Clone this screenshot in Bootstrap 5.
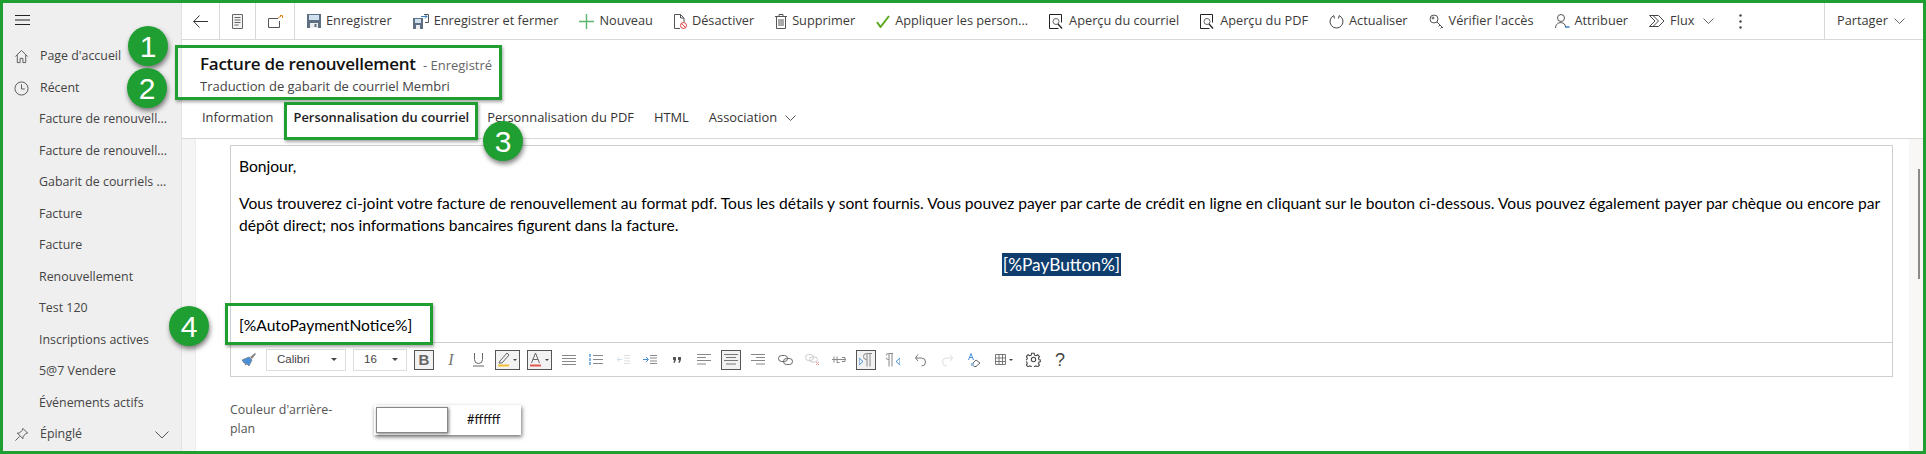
<!DOCTYPE html>
<html lang="fr">
<head>
<meta charset="utf-8">
<title>Facture de renouvellement</title>
<link href="https://cdn.jsdelivr.net/npm/bootstrap@5.3.0/dist/css/bootstrap.min.css" rel="stylesheet">
<style>
html,body{margin:0;height:454px;overflow:hidden;background:#fff}
body{font-family:"Open Sans","Noto Sans",sans-serif;font-size:12.4px;color:#3b3a39}
svg{display:block;flex:none}
.frame{position:relative;width:1926px;height:454px;border:3px solid #1f9e32;overflow:hidden;display:flex}
.side{width:179px;flex:none;background:#efefef;border-right:1px solid #e2e2e2;display:flex;flex-direction:column}
.burger{height:38px;padding:11px 0 0 12px;flex:none}
.side-row{height:31.5px;flex:none;display:flex;align-items:center;white-space:nowrap;color:#444;position:relative}
.side-row.top{padding-left:11px;gap:11px}
.side-row.sub{padding-left:36px}
.side-row .end{margin-left:auto;margin-right:12px}
.main{flex:1;min-width:0;display:flex;flex-direction:column}
.cmdbar{height:37px;flex:none;border-bottom:1px solid #d8d8d8;display:flex;align-items:stretch;white-space:nowrap;font-size:12.75px}
.cmd-ic{display:flex;align-items:center;justify-content:center;border-right:1px solid #d8d8d8;flex:none}
.w1{width:38px}.w2{width:36px}.w3{width:39px}
.cmds{display:flex;align-items:center;flex:1;padding-left:12px;gap:21px}
.cmd{display:flex;align-items:center;gap:5px}
.share{width:99px;flex:none;border-left:1px solid #d8d8d8;display:flex;align-items:center;padding-left:12px;gap:6px;margin-right:0}
.rec-head{height:59px;flex:none;padding:13px 0 0 18px}
.rec-title{font-size:17px;font-weight:600;line-height:22px;color:#111;letter-spacing:-.25px}
.rec-state{font-size:13px;font-weight:400;color:#666;letter-spacing:0;margin-left:3px}
.rec-sub{font-size:13px;line-height:20px;color:#444}
.tabbar{height:40px;flex:none;border-bottom:1px solid #d8d8d8;display:flex;gap:20px;padding:9px 0 0 20px;white-space:nowrap;color:#333;font-size:12.9px}
.tabbar .on{font-weight:600;color:#222;margin-right:-2px}
.tabbar span{display:flex;gap:8px;height:20px;align-items:center}
.body-zone{flex:1;display:flex;min-height:0}
.gutter{width:14px;flex:none;background:#f5f5f5;border-right:1px solid #ececec}
.panel{flex:1;min-width:0;padding:6px 16px 0 34px}
.scroll{width:14px;flex:none;background:#f8f7f6;padding:30px 0 0 9px}
.thumb{width:2px;height:110px;background:#8a8a88}
.editor{height:232px;border:1px solid #cfcfcf;display:flex;flex-direction:column}
.doc{height:197px;flex:none;border-bottom:1px solid #cfcfcf;padding:9px 8px 0 8px;font-family:Lato,"Open Sans",sans-serif;font-size:15.6px;line-height:22px;color:#000}
.doc p{margin:0}
.doc .para{margin-top:15px}
.doc .pay{margin-top:18px;text-align:center;font-size:17.3px}
.doc .pay span{background:#0f3d6e;color:#fff;padding:1px 1px}
.doc .auto{margin-top:38px}
.tools{flex:1;display:flex;align-items:center;gap:7px;padding-left:8px}
.tbtn{width:20px;height:20px;flex:none;display:flex;align-items:center;justify-content:center;border:1px solid transparent}
.tbtn.wide{width:25px}
.tbtn.act{border-color:#555;background:#f2f2f2}
.pick{height:22px;border:1px solid #dedede;flex:none;display:flex;align-items:center;justify-content:space-between;padding:0 8px 0 10px;font-family:"Liberation Sans",sans-serif;font-size:11.5px;color:#444}
.pick i{width:0;height:0;border:3px solid transparent;border-top-color:#444;margin-top:3px}
.p1{width:80px}.p2{width:54px}
.q{font-family:"Liberation Sans",sans-serif;font-size:18px;line-height:1;color:#444}
.tq-b{font-size:15px;color:#666}
.tq-i{font-size:16px;color:#777;font-family:"Liberation Serif",serif}
.colr{display:flex;margin-top:28px;gap:0}
.colr-lbl{width:144px;flex:none;line-height:19px;color:#555;margin-top:-5px}
.colr-box{width:147px;height:30px;display:flex;align-items:center;background:#fff;box-shadow:1px 2px 4px rgba(0,0,0,.55);padding:2px}
.swatch{width:72px;height:26px;border:1px solid #888;box-shadow:1px 1px 3px rgba(0,0,0,.5);flex:none}
.hex{margin-left:19px;font-family:Lato,sans-serif;font-size:13px;color:#111}
.mark-box{position:absolute;border:3px solid #1f9e32;box-shadow:1px 2px 3px rgba(0,0,0,.35);pointer-events:none}
.mark-num{position:absolute;width:40px;height:40px;border-radius:50%;background:#1f9e32;color:#fff;font-family:"Liberation Sans",sans-serif;font-size:30px;display:flex;align-items:center;justify-content:center;box-shadow:1px 3px 5px rgba(0,0,0,.5)}
.b1{left:172px;top:42px;width:327px;height:55px}
.b3{left:281px;top:99px;width:194px;height:38px}
.b4{left:222px;top:300px;width:208px;height:42px}
.n1{left:125px;top:23px}.n2{left:124px;top:65px}.n3{left:480px;top:118px}.n4{left:166px;top:303px}
</style>
</head>
<body>
<div class="frame">
  <nav class="side">
    <div class="burger"><svg width="15" height="12" viewBox="0 0 15 12" stroke="#222" stroke-width="1.2"><path d="M0 1.5h15M0 6h15M0 10.5h15"/></svg></div>
    <div class="side-row top"><svg width="15" height="15" viewBox="0 0 16 16" fill="none" stroke="#555"><path d="M1.5 8 8 1.5 14.5 8M3.5 6.5v8h3v-4.5h3v4.5h3v-8"/></svg><span>Page d'accueil</span></div>
    <div class="side-row top"><svg width="15" height="15" viewBox="0 0 16 16" fill="none" stroke="#555"><circle cx="8" cy="8" r="7"/><path d="M8 3.5V8.5H11.5"/></svg><span>Récent</span></div>
    <div class="side-row sub">Facture de renouvell...</div>
    <div class="side-row sub">Facture de renouvell...</div>
    <div class="side-row sub">Gabarit de courriels ...</div>
    <div class="side-row sub">Facture</div>
    <div class="side-row sub">Facture</div>
    <div class="side-row sub">Renouvellement</div>
    <div class="side-row sub">Test 120</div>
    <div class="side-row sub">Inscriptions actives</div>
    <div class="side-row sub">5@7 Vendere</div>
    <div class="side-row sub">Événements actifs</div>
    <div class="side-row top"><svg width="15" height="15" viewBox="0 0 16 16" fill="none" stroke="#555"><path d="M9.5 1.5 14.5 6.5 12.5 7 9.5 10.5 9.5 12.5 3.5 6.5 5.5 6.5 9 3.5ZM6 10 1.5 14.5"/></svg><span>Épinglé</span><svg class="end" width="14" height="8" viewBox="0 0 14 8" fill="none" stroke="#555"><path d="M.5.5 7 7 13.5.5"/></svg></div>
  </nav>
  <div class="main">
    <div class="cmdbar">
      <div class="cmd-ic w1"><svg width="15" height="13" viewBox="0 0 15 13" fill="none" stroke="#333"><path d="M6.5.5.7 6.5l5.8 6M.7 6.5H15"/></svg></div>
      <div class="cmd-ic w2"><svg width="11" height="15" viewBox="0 0 11 15" fill="#f3f3f3" stroke="#666"><path d="M.5.5h10v14H.5z"/><path d="M2.5 3.5h6M2.5 6h6M2.5 8.500h6M2.500 11h4" fill="none"/></svg></div>
      <div class="cmd-ic w3"><svg width="15" height="13" viewBox="0 0 15 13" fill="none" stroke="#555"><path d="M10 3.500H.5v9h11V6"/><path d="M10 3 13.500.8" stroke="#e08a20"/><path d="M12 .5h2.500V3" stroke="#e08a20"/></svg></div>
      <div class="cmds">
        <div class="cmd"><svg width="14" height="14" viewBox="0 0 14 14"><path d="M0 0h14v14H0z" fill="#5d6f80"/><path d="M2 1h10v5H2z" fill="#cfe0ef"/><path d="M3 9h8v5H3z" fill="#eee"/><path d="M7.500 10h2v3h-2z" fill="#5d6f80"/></svg><span>Enregistrer</span></div>
        <div class="cmd"><svg width="16" height="15" viewBox="0 0 16 15"><path d="M0 4h10v11H0z" fill="#5d6f80"/><path d="M2 5h6v4H2z" fill="#cfe0ef"/><path d="M3 11h4v4H3z" fill="#eee"/><path d="M8 2.500h6M12 .5l2 2-2 2" fill="none" stroke="#3a7ec8"/><path d="M11 .5h4.500v8H12" fill="none" stroke="#555"/></svg><span>Enregistrer et fermer</span></div>
        <div class="cmd"><svg width="15" height="15" viewBox="0 0 15 15" stroke="#5bb56a" stroke-width="1.400"><path d="M7.500 0v15M0 7.500h15"/></svg><span>Nouveau</span></div>
        <div class="cmd"><svg width="13" height="15" viewBox="0 0 13 15" fill="none" stroke="#555"><path d="M6 14.500H.5V.5h6L10 4v4M6.500.5V4H10"/><circle cx="9.500" cy="11.500" r="3" stroke="#e23b3b"/><path d="M7.500 9.500l4 4" stroke="#e23b3b"/></svg><span>Désactiver</span></div>
        <div class="cmd"><svg width="12" height="15" viewBox="0 0 12 15" fill="none" stroke="#555"><path d="M0 2.500h12M4 2.500V.5h4v2M1.500 2.500v12h9v-12M4 5v7M6 5v7M8 5v7"/></svg><span>Supprimer</span></div>
        <div class="cmd"><svg width="14" height="13" viewBox="0 0 14 13" fill="none" stroke="#5ea820" stroke-width="2"><path d="M1 7l3.500 5L13 1"/></svg><span>Appliquer les person...</span></div>
        <div class="cmd"><svg width="15" height="15" viewBox="0 0 15 15" fill="none" stroke="#222"><path d="M12.500 8.500v-8H.5v14h9"/><circle cx="7" cy="7.500" r="3" stroke="#666"/><path d="M9 10l4 4.500" stroke-width="1.300"/></svg><span>Aperçu du courriel</span></div>
        <div class="cmd"><svg width="15" height="15" viewBox="0 0 15 15" fill="none" stroke="#222"><path d="M12.500 8.500v-8H.5v14h9"/><circle cx="7" cy="7.500" r="3" stroke="#666"/><path d="M9 10l4 4.500" stroke-width="1.300"/></svg><span>Aperçu du PDF</span></div>
        <div class="cmd"><svg width="15" height="15" viewBox="0 0 15 15" fill="none" stroke="#444"><path d="M4.800 1.600A6.500 6.500 0 1 0 10.200 1.600M10.200 1.600 9.500 4.500M4.800 1.600 5.500 4.500"/></svg><span>Actualiser</span></div>
        <div class="cmd"><svg width="15" height="15" viewBox="0 0 15 15" fill="none" stroke="#555"><circle cx="5" cy="5" r="4"/><path d="M8 8l6 6M11 11l-1.500 1.500M13 13l-1.500 1.500"/><circle cx="4" cy="4" r="1"/></svg><span>Vérifier l'accès</span></div>
        <div class="cmd"><svg width="15" height="15" viewBox="0 0 15 15" fill="none" stroke="#555"><circle cx="6" cy="4" r="3.500"/><path d="M.5 14c0-7 10-7 10-1"/><path d="M10 13h4.500" stroke="#3a7ec8" stroke-width="1.500"/></svg><span>Attribuer</span></div>
        <div class="cmd"><svg width="16" height="12" viewBox="0 0 16 12" fill="none" stroke="#444"><path d="M.5.5h9L15 6l-5.500 5.500H.5M4 .5 9.500 6 4 11.500H.5L6 6 .5.5"/></svg><span>Flux</span><svg class="ms-1" width="11" height="6" viewBox="0 0 11 6" fill="none" stroke="#666"><path d="M.5.5 5.500 5.500 10.500.5"/></svg></div>
        <div class="cmd ms-1"><svg width="3" height="15" viewBox="0 0 3 15" fill="#444"><circle cx="1.500" cy="1.500" r="1.200"/><circle cx="1.500" cy="7.500" r="1.200"/><circle cx="1.500" cy="13.500" r="1.200"/></svg></div>
      </div>
      <div class="share"><span>Partager</span><svg width="11" height="6" viewBox="0 0 11 6" fill="none" stroke="#666"><path d="M.5.5 5.500 5.500 10.500.5"/></svg></div>
    </div>
    <div class="rec-head">
      <div class="rec-title">Facture de renouvellement <span class="rec-state">- Enregistré</span></div>
      <div class="rec-sub">Traduction de gabarit de courriel Membri</div>
    </div>
    <div class="tabbar">
      <span>Information</span>
      <span class="on">Personnalisation du courriel</span>
      <span>Personnalisation du PDF</span>
      <span>HTML</span>
      <span>Association <svg width="11" height="6" viewBox="0 0 11 6" fill="none" stroke="#555"><path d="M.5.5 5.500 5.500 10.500.5"/></svg></span>
    </div>
    <div class="body-zone">
      <div class="gutter"></div>
      <div class="panel">
        <div class="editor">
          <div class="doc">
            <p>Bonjour,</p>
            <p class="para">Vous trouverez ci-joint votre facture de renouvellement au format pdf. Tous les détails y sont fournis. Vous pouvez payer par carte de crédit en ligne en cliquant sur le bouton ci-dessous. Vous pouvez également payer par chèque ou encore par dépôt direct; nos informations bancaires figurent dans la facture.</p>
            <p class="pay"><span>[%PayButton%]</span></p>
            <p class="auto">[%AutoPaymentNotice%]</p>
          </div>
          <div class="tools">
            <div class="tbtn"><svg width="16" height="15" viewBox="0 0 16 15"><path d="M1 8 8 5l3 3-3 6-2-2-2 1 1-2-2 0Z" fill="#4a90d9" stroke="#666" stroke-width=".6"/><path d="M9 5l5-4 1 1-4 5Z" fill="#888"/></svg></div>
            <div class="pick p1"><span>Calibri</span><i></i></div>
            <div class="pick p2"><span>16</span><i></i></div>
            <div class="tbtn act"><b class="q tq-b">B</b></div>
            <div class="tbtn"><i class="q tq-i">I</i></div>
            <div class="tbtn"><svg width="11" height="15" viewBox="0 0 11 15" fill="none" stroke="#666"><path d="M1.500 1v6.500a4 4 0 0 0 8 0V1M0 14h11"/></svg></div>
            <div class="tbtn wide act"><svg width="21" height="15" viewBox="0 0 21 15" fill="none"><path d="M3 9l7-8 2 2-7 8-3 0Z" stroke="#666"/><path d="M1 13.500h11" stroke="#f2c037" stroke-width="2"/><path d="M16 7h4l-2 2Z" fill="#444"/></svg></div>
            <div class="tbtn wide act"><svg width="21" height="15" viewBox="0 0 21 15" fill="none"><path d="M2.500 11 6.500 1l4 10M4 7.500h5" stroke="#666"/><path d="M1 13.500h11" stroke="#e05a4f" stroke-width="2"/><path d="M16 7h4l-2 2Z" fill="#444"/></svg></div>
            <div class="tbtn"><svg width="14" height="10" viewBox="0 0 14 10" stroke="#888"><path d="M0 .5h14M0 3.500h14M0 6.500h14M0 9.500h14"/></svg></div>
            <div class="tbtn"><svg width="14" height="11" viewBox="0 0 14 11" stroke="#888"><path d="M4 1.500h10M4 5.500h10M4 9.500h10"/><path d="M1 0v3M1 4v3M1 8v3" stroke="#5a9be0" stroke-width="1.500"/></svg></div>
            <div class="tbtn"><svg width="13" height="9" viewBox="0 0 13 9" fill="none" stroke="#cfdcea"><path d="M5 4.500H0M2.500 2 0 4.500 2.500 7"/><path d="M7 .5h6M7 3h6M7 6h6M7 8.500h6" stroke="#ddd"/></svg></div>
            <div class="tbtn"><svg width="14" height="9" viewBox="0 0 14 9" fill="none" stroke="#4a90d9"><path d="M0 4.500h5M3 2l2.500 2.500L3 7"/><path d="M7 .5h7M7 3h7M7 6h7M7 8.500h7" stroke="#888"/></svg></div>
            <div class="tbtn"><svg width="8" height="6" viewBox="0 0 8 6" fill="#555"><path d="M0 0h3v3L1.500 6H.5L1 3H0ZM5 0h3v3L6.500 6h-1L6 3H5Z"/></svg></div>
            <div class="tbtn"><svg width="14" height="11" viewBox="0 0 14 11" stroke="#888"><path d="M0 .5h14M0 3.500h9M0 6.500h14M0 10h9"/></svg></div>
            <div class="tbtn act"><svg width="14" height="11" viewBox="0 0 14 11" stroke="#777"><path d="M0 .5h14M2 3.500h10M0 6.500h14M2 10h10"/></svg></div>
            <div class="tbtn"><svg width="14" height="11" viewBox="0 0 14 11" stroke="#888"><path d="M0 .5h14M5 3.500h9M0 6.500h14M5 10h9"/></svg></div>
            <div class="tbtn"><svg width="15" height="10" viewBox="0 0 15 10" fill="none" stroke="#666"><rect x=".5" y=".5" width="9" height="6" rx="3"/><rect x="5.500" y="3.500" width="9" height="6" rx="3"/></svg></div>
            <div class="tbtn"><svg width="15" height="12" viewBox="0 0 15 12" fill="none" stroke="#ccc"><rect x=".5" y=".5" width="8" height="6" rx="3"/><rect x="4.500" y="3" width="8" height="5" rx="2.500"/><path d="M11 8l3 3M14 8l-3 3" stroke="#f0a0a0"/></svg></div>
            <div class="tbtn"><svg width="14" height="7" viewBox="0 0 14 7" fill="none" stroke="#888"><path d="M0 3.500h14M2 .5v6M5 .5v6h2.500M10 1.500h3v4h-3"/></svg></div>
            <div class="tbtn act"><svg width="14" height="14" viewBox="0 0 14 14" fill="none"><path d="M0 5v7l4-3.500Z" stroke="#4a90d9"/><path d="M13 .5H7.500a3 3 0 0 0 0 6H8M8 .5v13M11 .5v13" stroke="#888"/></svg></div>
            <div class="tbtn"><svg width="14" height="14" viewBox="0 0 14 14" fill="none"><path d="M14 5v7l-4-3.500Z" stroke="#4a90d9"/><path d="M7 .5H2.500a3 3 0 0 0 0 6H3M3 .5v13M6 .5v13" stroke="#888"/></svg></div>
            <div class="tbtn"><svg width="11" height="14" viewBox="0 0 11 14" fill="none" stroke="#777"><path d="M.5 5h6a4 4 0 0 1 0 8M3 1.500.5 5 3 8"/></svg></div>
            <div class="tbtn"><svg width="11" height="14" viewBox="0 0 11 14" fill="none" stroke="#ddd"><path d="M10.500 5h-6a4 4 0 0 0 0 8M8 1.500 10.500 5 8 8"/></svg></div>
            <div class="tbtn"><svg width="13" height="14" viewBox="0 0 13 14" fill="none"><path d="M.5 7 3 .5 5.500 7M1.500 4.500h3" stroke="#4a90d9"/><path d="M4 11l4-4 4 3-4 3.500H6Z" stroke="#666"/><path d="M3 10h3v3H3z" fill="#9ab8d8"/></svg></div>
            <div class="tbtn wide"><svg width="18" height="11" viewBox="0 0 18 11" fill="none" stroke="#777"><path d="M.5.500h10v10H.5zM.5 4h10M.5 7.500h10M4 .5v10M7.500.5v10"/><path d="M14 5h4l-2 2Z" fill="#444" stroke="none"/></svg></div>
            <div class="tbtn"><svg width="15" height="15" viewBox="0 0 24 24" fill="none" stroke="#444" stroke-width="1.700"><circle cx="12" cy="12" r="3.500"/><path d="M10 2h4l.6 3 2.500 1 2.600-1.600 2.800 2.800-1.600 2.600 1 2.500 3 .6v2.400l-3 .6-1 2.500 1.600 2.600-2.800 2.800-2.600-1.600-2.500 1-.6 3h-4l-.6-3-2.500-1-2.600 1.600-2.800-2.800 1.600-2.600-1-2.500-3-.6v-2.400l3-.6 1-2.500-1.600-2.600 2.800-2.800 2.600 1.600 2.500-1Z" transform="translate(-1 0)"/></svg></div>
            <div class="tbtn"><span class="q">?</span></div>
          </div>
        </div>
        <div class="colr">
          <div class="colr-lbl">Couleur d'arrière-<br>plan</div>
          <div class="colr-box"><div class="swatch"></div><span class="hex">#ffffff</span></div>
        </div>
      </div>
      <div class="scroll"><div class="thumb"></div></div>
    </div>
  </div>
  <div class="mark-box b1"></div>
  <div class="mark-box b3"></div>
  <div class="mark-box b4"></div>
  <div class="mark-num n1">1</div>
  <div class="mark-num n2">2</div>
  <div class="mark-num n3">3</div>
  <div class="mark-num n4">4</div>
</div>
<script src="https://cdn.jsdelivr.net/npm/bootstrap@5.3.0/dist/js/bootstrap.bundle.min.js"></script>
</body>
</html>
